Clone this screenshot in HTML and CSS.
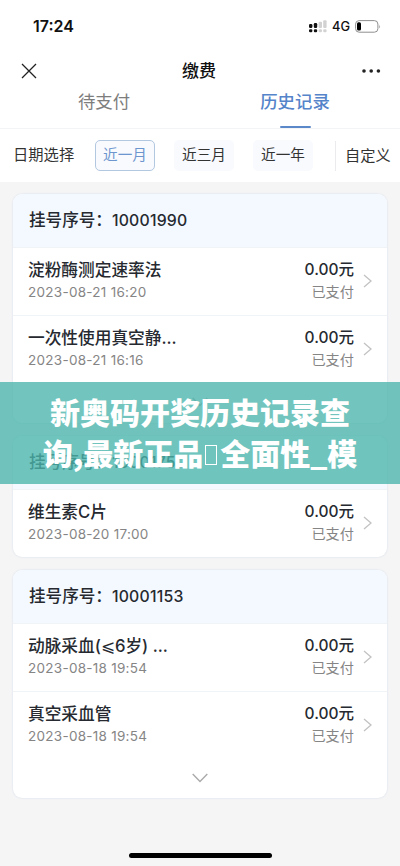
FILE: index.html
```html
<!DOCTYPE html>
<html lang="zh-CN">
<head>
<meta charset="utf-8">
<title>缴费</title>
<link rel="stylesheet" href="styles.css">
</head>
<body>
<div class="screen">
  <div class="status">
    <span class="time">17:24</span>
    <div class="status-right">
      <svg class="signal" width="18" height="13" viewBox="0 0 18 13"><g fill="#111"><rect x="0" y="4" width="3.4" height="4" rx="1.2"/><rect x="4.8" y="3" width="3.4" height="5" rx="1.2"/><rect x="0" y="9.2" width="3.4" height="3" rx="1.2"/><rect x="4.8" y="9.2" width="3.4" height="3" rx="1.2"/></g><g fill="#d2d2d2"><rect x="9.6" y="1.7" width="3.4" height="6.3" rx="1"/><rect x="14.2" y="0.2" width="3.4" height="7.8" rx="1"/><rect x="9.6" y="9.2" width="3.4" height="3" rx="1.2"/><rect x="14.2" y="9.2" width="3.4" height="3" rx="1.2"/></g></svg>
      <span class="net">4G</span>
      <svg class="battery" width="26" height="13" viewBox="0 0 26 13"><rect x=".6" y=".6" width="22.3" height="11.6" rx="3.5" fill="#fff" stroke="#8f8f8f"/><rect x="2" y="2.3" width="4" height="8.2" rx="1.5" fill="#000"/><path d="M24.3 4.4q1.3 2 0 4z" fill="#888"/></svg>
    </div>
  </div>
  <div class="nav">
    <svg width="16" height="16" viewBox="0 0 16 16"><path d="M1 1l14 14M15 1L1 15" stroke="#222" stroke-width="1.3" fill="none"/></svg>
    <span class="title">缴费</span>
    <svg width="20" height="4" viewBox="0 0 20 4" fill="#222"><circle cx="3" cy="2" r="1.8"/><circle cx="10.2" cy="2" r="1.8"/><circle cx="17.4" cy="2" r="1.8"/></svg>
  </div>
  <div class="tabs">
    <div class="tab">待支付</div>
    <div class="tab active">历史记录</div>
  </div>
  <div class="filters">
    <span class="label">日期选择</span>
    <span class="chip on">近一月</span>
    <span class="chip">近三月</span>
    <span class="chip">近一年</span>
    <span class="custom">自定义</span>
  </div>
  <div class="list">
    <section class="card">
      <div class="head">挂号序号：<span>10001990</span></div>
      <div class="row"><div class="info"><div class="name">淀粉酶测定速率法</div><div class="date">2023-08-21 16:20</div></div><div class="pay"><div class="price"><span>0.00</span>元</div><div class="state">已支付</div></div><svg class="arrow" width="9" height="14" viewBox="0 0 9 14"><path d="M1 1l7 6-7 6"/></svg></div>
      <div class="row"><div class="info"><div class="name">一次性使用真空静<span>...</span></div><div class="date">2023-08-21 16:16</div></div><div class="pay"><div class="price"><span>0.00</span>元</div><div class="state">已支付</div></div><svg class="arrow" width="9" height="14" viewBox="0 0 9 14"><path d="M1 1l7 6-7 6"/></svg></div>
      <div class="more"><svg width="16" height="10" viewBox="0 0 16 10"><path d="M.7 1l7.3 7.5L15.3 1"/></svg></div>
    </section>
    <section class="card">
      <div class="head">挂号序号：<span>10001750</span></div>
      <div class="row"><div class="info"><div class="name">维生素<span>C</span>片</div><div class="date">2023-08-20 17:00</div></div><div class="pay"><div class="price"><span>0.00</span>元</div><div class="state">已支付</div></div><svg class="arrow" width="9" height="14" viewBox="0 0 9 14"><path d="M1 1l7 6-7 6"/></svg></div>
    </section>
    <section class="card">
      <div class="head">挂号序号：<span>10001153</span></div>
      <div class="row"><div class="info"><div class="name">动脉采血(⩽6岁) <span>...</span></div><div class="date">2023-08-18 19:54</div></div><div class="pay"><div class="price"><span>0.00</span>元</div><div class="state">已支付</div></div><svg class="arrow" width="9" height="14" viewBox="0 0 9 14"><path d="M1 1l7 6-7 6"/></svg></div>
      <div class="row"><div class="info"><div class="name">真空采血管</div><div class="date">2023-08-18 19:54</div></div><div class="pay"><div class="price"><span>0.00</span>元</div><div class="state">已支付</div></div><svg class="arrow" width="9" height="14" viewBox="0 0 9 14"><path d="M1 1l7 6-7 6"/></svg></div>
      <div class="more"><svg width="16" height="10" viewBox="0 0 16 10"><path d="M.7 1l7.3 7.5L15.3 1"/></svg></div>
    </section>
  </div>
  <div class="home"></div>
  <div class="banner">
    <div>新奥码开奖历史记录查</div>
    <div>询,最新正品<i class="box"></i>全面性_模</div>
  </div>
</div>
</body>
</html>
```
FILE: styles.css
```css
* { box-sizing: border-box; }
body {
  margin: 0;
  font-family: Inter, "Noto Sans CJK SC", sans-serif;
  color: #262a30;
}
svg { display: block; flex: none; }
.screen {
  position: relative;
  display: flex;
  flex-direction: column;
  width: 400px;
  height: 866px;
  overflow: hidden;
  background: #f5f5f6;
}
.status {
  display: flex;
  justify-content: space-between;
  align-items: center;
  height: 52px;
  padding: 0 19px 0 33px;
  background: #fff;
}
.time { font-size: 16px; font-weight: 600; color: #111; }
.status-right { display: flex; align-items: center; }
.net { margin: 0 5px 0 5px; font-size: 12.8px; font-weight: 500; color: #111; }
.nav {
  display: flex;
  justify-content: space-between;
  align-items: center;
  height: 38px;
  padding: 0 19px 0 21px;
  background: #fff;
}
.title { font-size: 17px; line-height: 24px; font-weight: 500; color: #111; }
.tabs {
  display: flex;
  height: 39px;
  padding: 0 9px;
  background: #fff;
  border-bottom: 1px solid #f3f4f6;
}
.tab {
  flex: 1;
  display: flex;
  flex-direction: column;
  align-items: center;
  justify-content: space-between;
  padding-right: 1px;
  font-size: 17.4px;
  line-height: 24px;
  color: #7d7d7d;
}
.active { color: #5584ca; font-weight: 500; }
.active::after { content: ""; width: 31px; height: 2px; border-radius: 1px; background: #5b88c8; }
.filters {
  display: flex;
  align-items: center;
  height: 53px;
  padding-left: 13px;
  font-size: 15px;
  background: #fff;
  color: #333;
}
.label { width: 82px; font-size: 15.3px; line-height: 22px; padding-bottom: 2px; }
.chip {
  width: 60px;
  height: 31px;
  margin-right: 19px;
  border-radius: 5px;
  background: #f8fafe;
  font-size: 14.6px;
  line-height: 30px;
  text-align: center;
}
.on { border: 1px solid #b2c7e0; line-height: 28px; color: #6d96cf; }
.custom { margin-left: 3px; padding-left: 9px; line-height: 30px; border-left: 1px solid #ebebed; font-size: 15.2px; white-space: nowrap; }
.list { display: flex; flex-direction: column; gap: 13px; padding: 12px 13px 0; }
.card {
  border-radius: 9px;
  background: #fff;
  overflow: hidden;
  box-shadow: 0 0 2px #cfd8e2;
}
.head {
  height: 53px;
  padding-left: 16px;
  background: #f4f9ff;
  font-size: 16.6px;
  line-height: 53px;
  font-weight: 500;
}
.head span { font-size: 15.8px; letter-spacing: .2px; }
.row {
  display: flex;
  align-items: center;
  height: 68px;
  padding: 0 15px 4px;
  border-top: 1px solid #f1f4f7;
}
.row .arrow { margin-top: 3px; }
.info { flex: 1; }
.name, .price { font-size: 16.7px; line-height: 24px; font-weight: 500; white-space: nowrap; }
.price { font-size: 15.5px; }
.date { font-size: 13.5px; line-height: 20px; color: #858585; letter-spacing: .27px; }
.pay { text-align: right; }
.state { font-size: 14.2px; line-height: 20px; color: #858585; }
.arrow { margin-left: 9px; fill: none; stroke: #c2c2c2; stroke-width: 1.3; }
.more {
  display: flex;
  justify-content: center;
  height: 39px;
  padding-top: 14px;
}
.more path { fill: none; stroke: #aaa; stroke-width: 1.4; }
.card:first-child .more { height: 40px; }
.home {
  position: absolute;
  left: 129px;
  bottom: 8px;
  width: 143px;
  height: 5px;
  border-radius: 3px;
  background: #000;
}
.banner {
  position: absolute;
  left: 0;
  top: 382px;
  width: 100%;
  height: 102px;
  padding-top: 9px;
  background: rgba(75, 182, 172, .79);
  color: #fff;
  font: 900 30px/41px "Noto Sans CJK SC", sans-serif;
  text-align: center;
  white-space: nowrap;
}
.box {
  display: inline-block;
  width: 12px;
  height: 20px;
  margin: 0 3px 0 2px;
  border: 1.5px solid #fff;
  vertical-align: 0;
}
```
